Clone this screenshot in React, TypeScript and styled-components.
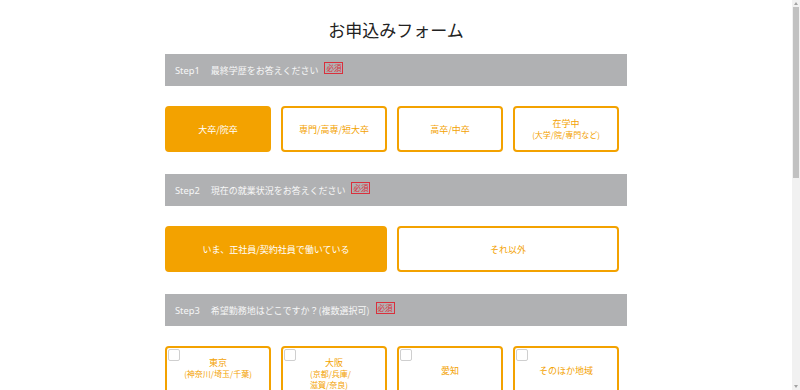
import * as React from 'react';
import styled, { createGlobalStyle } from 'styled-components';

const GlobalStyle = createGlobalStyle`
  html, body {
    margin: 0;
    padding: 0;
    background: #fff;
  }
  body {
    padding-right: 8px;
    font-family: "Noto Sans CJK JP", "Noto Sans", sans-serif;
    color: #222;
  }
`;

const ORANGE = '#f3a200';

// the browser's own scrollbar, drawn since the headless page hides it
const ScrollTrack = styled.div`
  position: fixed;
  top: 0;
  right: 0;
  width: 8px;
  height: 100vh;
  background: #f1f1f1;
`;

const ScrollThumb = styled.div`
  position: absolute;
  top: 7px;
  left: 1px;
  width: 6px;
  height: 171px;
  background: #c1c1c1;
`;

const ScrollArrow = styled.div<{ $down?: boolean }>`
  position: absolute;
  left: 2px;
  ${(p) => (p.$down ? 'bottom: 2px;' : 'top: 2px;')}
  width: 0;
  height: 0;
  border-left: 2px solid transparent;
  border-right: 2px solid transparent;
  ${(p) => (p.$down ? 'border-top: 3px solid #a3a3a3;' : 'border-bottom: 3px solid #a3a3a3;')}
`;

const Page = styled.div`
  width: 462px;
  margin: 0 auto;
  padding: 17px 0 40px;
`;

const Title = styled.h1`
  margin: 0 0 11px;
  font-size: 17px;
  line-height: 26px;
  font-weight: 400;
  text-align: center;
  color: #222;
`;

const StepBar = styled.div`
  height: 32px;
  display: flex;
  align-items: center;
  padding-left: 10px;
  background: #b0b1b3;
  color: #f7f7f7;
  font-size: 9px;
`;

const StepNo = styled.span`
  margin-right: 11px;
  font-family: "Noto Sans", sans-serif;
  font-size: 9.3px;
`;

const Badge = styled.span`
  margin-left: 6px;
  padding: 0 1px;
  height: 10px;
  line-height: 10px;
  border: 1px solid #d9303c;
  color: #d9303c;
  font-size: 7.5px;
  position: relative;
  top: -2px;
`;

const Choices = styled.div<{ $cols: number }>`
  display: grid;
  grid-template-columns: repeat(${(p) => p.$cols}, ${(p) => (p.$cols === 4 ? '106px' : '222px')});
  gap: 10px;
  margin: 20px 0 22px;
`;

const Choice = styled.label<{ $active?: boolean; $tall?: boolean }>`
  position: relative;
  box-sizing: border-box;
  height: ${(p) => (p.$tall ? '66px' : '46px')};
  display: flex;
  flex-direction: column;
  align-items: center;
  justify-content: ${(p) => (p.$tall ? 'flex-start' : 'center')};
  padding-top: ${(p) => (p.$tall ? '9px' : '0')};
  border: 2px solid ${ORANGE};
  border-radius: 4px;
  background: ${(p) => (p.$active ? ORANGE : '#fff')};
  color: ${(p) => (p.$active ? '#fff' : ORANGE)};
  font-size: 9px;
  line-height: 11px;
  text-align: center;
  cursor: pointer;
`;

const Sub = styled.span<{ $left?: boolean }>`
  display: block;
  font-size: 8px;
  line-height: 11px;
  ${(p) => p.$left && 'max-width: 48px; text-align: left;'}
`;

const Label = styled.span<{ $offset?: boolean }>`
  display: block;
  margin-top: ${(p) => (p.$offset ? '8px' : '0')};
`;

const Check = styled.span`
  position: absolute;
  top: 1px;
  left: 1px;
  width: 10px;
  height: 10px;
  border: 1px solid #cfcfcf;
  border-radius: 2px;
  background: #fff;
`;

const steps = [
  { no: 'Step1', text: '最終学歴をお答えください' },
  { no: 'Step2', text: '現在の就業状況をお答えください' },
  { no: 'Step3', text: '希望勤務地はどこですか？(複数選択可)' },
];

const Step = ({ index }: { index: number }) => (
  <StepBar>
    <StepNo>{steps[index].no}</StepNo>
    {steps[index].text}
    <Badge>必須</Badge>
  </StepBar>
);

const App = () => (
  <>
    <GlobalStyle />
    <Page>
      <Title>お申込みフォーム</Title>

      <Step index={0} />
      <Choices $cols={4}>
        <Choice $active>大卒/院卒</Choice>
        <Choice>専門/高専/短大卒</Choice>
        <Choice>高卒/中卒</Choice>
        <Choice>
          在学中
          <Sub>(大学/院/専門など)</Sub>
        </Choice>
      </Choices>

      <Step index={1} />
      <Choices $cols={2}>
        <Choice $active>いま、正社員/契約社員で働いている</Choice>
        <Choice>それ以外</Choice>
      </Choices>

      <Step index={2} />
      <Choices $cols={4}>
        <Choice $tall>
          <Check />
          <Label>東京</Label>
          <Sub>(神奈川/埼玉/千葉)</Sub>
        </Choice>
        <Choice $tall>
          <Check />
          <Label>大阪</Label>
          <Sub $left>(京都/兵庫/滋賀/奈良)</Sub>
        </Choice>
        <Choice $tall>
          <Check />
          <Label $offset>愛知</Label>
        </Choice>
        <Choice $tall>
          <Check />
          <Label $offset>そのほか地域</Label>
        </Choice>
      </Choices>
      <div style={{ height: 400 }} />
    </Page>
    <ScrollTrack>
      <ScrollArrow />
      <ScrollThumb />
      <ScrollArrow $down />
    </ScrollTrack>
  </>
);

export default App;
